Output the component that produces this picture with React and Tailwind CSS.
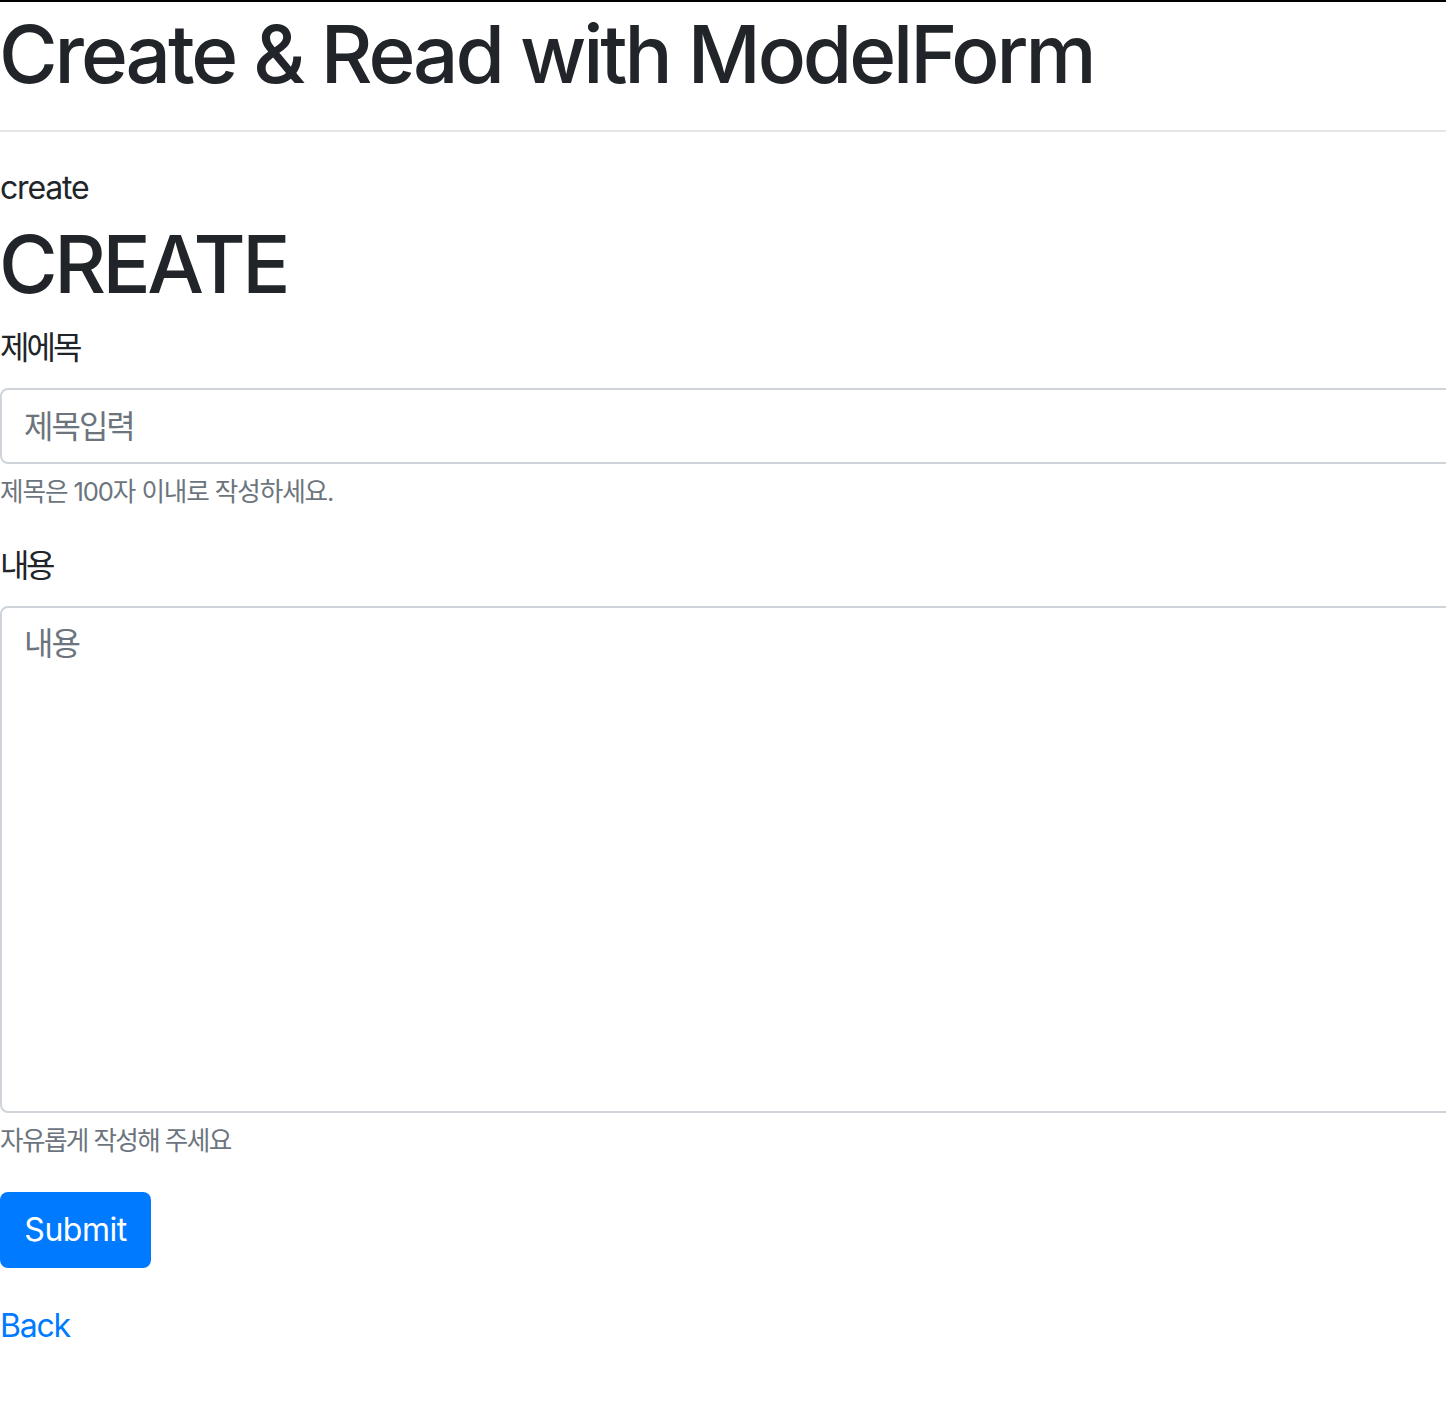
export default function App() {
  return (
    <div
      className="w-full min-h-[1422px] overflow-hidden bg-white border-t-2 border-black text-[#212529]"
      style={{ fontFamily: 'Inter, "Noto Sans CJK KR", sans-serif' }}
    >
      <div className="w-[1470px]">
        {/* Page title */}
        <h1 className="-ml-[1px] pt-[8px] text-[80px] leading-[88px] font-medium tracking-[-3.1px]">
          Create &amp; Read with ModelForm
        </h1>
        <hr className="mt-[32px] mb-[32px] border-0 border-t-2 border-[#e6e6e6]" />

        <div className="text-[32px] leading-[48px] tracking-[-1.2px]">create</div>
        <h1 className="-ml-[1px] pt-[8px] text-[80px] leading-[88px] font-medium tracking-[-3.5px] mb-[16px]">
          CREATE
        </h1>

        <form>
          {/* Title field */}
          <div className="mb-[32px]">
            <label className="block text-[32px] leading-[48px] tracking-[-3px] mb-[16px]">제에목</label>
            <input
              type="text"
              placeholder="제목입력"
              className="block w-full h-[76px] px-[22px] py-[12px] text-[32px] leading-[48px] tracking-[-2px] border-2 border-[#ced4da] rounded-[8px] placeholder:text-[#6c757d] outline-none"
            />
            <small className="block mt-[10px] text-[25.6px] leading-[36.4px] tracking-[-1.1px] text-[#6c757d]">
              제목은 100자 이내로 작성하세요.
            </small>
          </div>

          {/* Content field */}
          <div className="mb-[32px]">
            <label className="block text-[32px] leading-[48px] tracking-[-3.5px] mb-[16px]">내용</label>
            <textarea
              rows={10}
              placeholder="내용"
              className="block w-full h-[507px] px-[22px] py-[12px] text-[32px] leading-[48px] tracking-[-2px] border-2 border-[#ced4da] rounded-[8px] placeholder:text-[#6c757d] outline-none resize-none"
            />
            <small className="block mt-[10px] text-[25.6px] leading-[36.4px] tracking-[-1.6px] text-[#6c757d]">
              자유롭게 작성해 주세요
            </small>
          </div>

          <button
            type="submit"
            className="h-[76px] w-[151px] text-[32px] leading-[48px] tracking-[-0.5px] text-white bg-[#007bff] rounded-[8px]"
          >
            Submit
          </button>
        </form>

        <a href="#" className="block mt-[34px] text-[32px] leading-[48px] tracking-[-1.2px] text-[#007bff] w-fit">
          Back
        </a>
      </div>
    </div>
  );
}
